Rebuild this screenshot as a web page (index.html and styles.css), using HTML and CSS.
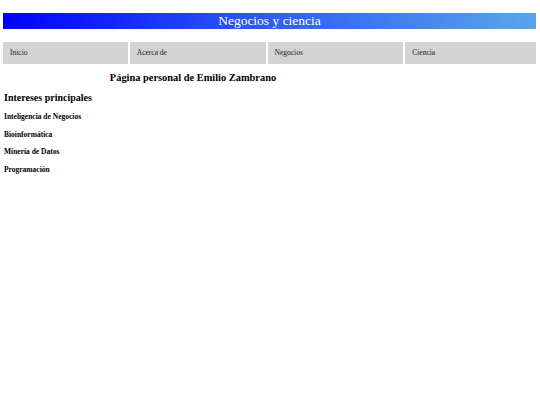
FILE: index.html
```html
<!DOCTYPE html>
<html lang="es">
<head>
<meta charset="utf-8">
<title>Negocios y ciencia</title>
<link rel="stylesheet" href="styles.css">
</head>
<body>
<div class="page">
  <header class="banner">Negocios y ciencia</header>
  <nav class="nav">
    <a class="nav-item w1" href="#">Inicio</a>
    <a class="nav-item w2" href="#">Acerca de</a>
    <a class="nav-item w2" href="#">Negocios</a>
    <a class="nav-item w3" href="#">Ciencia</a>
  </nav>
  <main class="content">
    <h1 class="title">Página personal de Emilio Zambrano</h1>
    <h2 class="subtitle">Intereses principales</h2>
    <ul class="interests">
      <li>Inteligencia de Negocios</li>
      <li>Bioinformática</li>
      <li>Minería de Datos</li>
      <li>Programación</li>
    </ul>
  </main>
</div>
</body>
</html>
```
FILE: styles.css
```css
html, body {
  margin: 0;
  padding: 0;
  background: #ffffff;
  font-family: "Liberation Serif", "Times New Roman", serif;
  color: #000;
}
.page {
  padding: 13px 4px 0 3px;
}
.banner {
  height: 16px;
  line-height: 16px;
  background: linear-gradient(to right, #0000ff 0%, #2a55f5 45%, #58a6ea 100%);
  color: #ffffff;
  text-align: center;
  font-size: 13.5px;
}
.nav {
  display: flex;
  gap: 2px;
  margin-top: 13px;
}
.nav-item {
  display: block;
  height: 22px;
  line-height: 22px;
  background: #d3d3d3;
  color: #1a1a1a;
  text-decoration: none;
  font-size: 7.5px;
  padding-left: 7px;
  box-sizing: border-box;
}
.w1 { width: 125px; }
.w2 { width: 136px; }
.w3 { width: 131px; }
.content {
  padding-left: 1px;
}
.title {
  width: 378px;
  text-align: center;
  font-size: 10.4px;
  margin: 7px 0 0 0;
  line-height: 13px;
}
.subtitle {
  font-size: 10px;
  margin: 7px 0 0 0;
  line-height: 13px;
}
.interests {
  list-style: none;
  margin: 8px 0 0 0;
  padding: 0;
}
.interests li {
  font-size: 7.5px;
  font-weight: bold;
  line-height: 9px;
  margin-bottom: 8.5px;
}
```
